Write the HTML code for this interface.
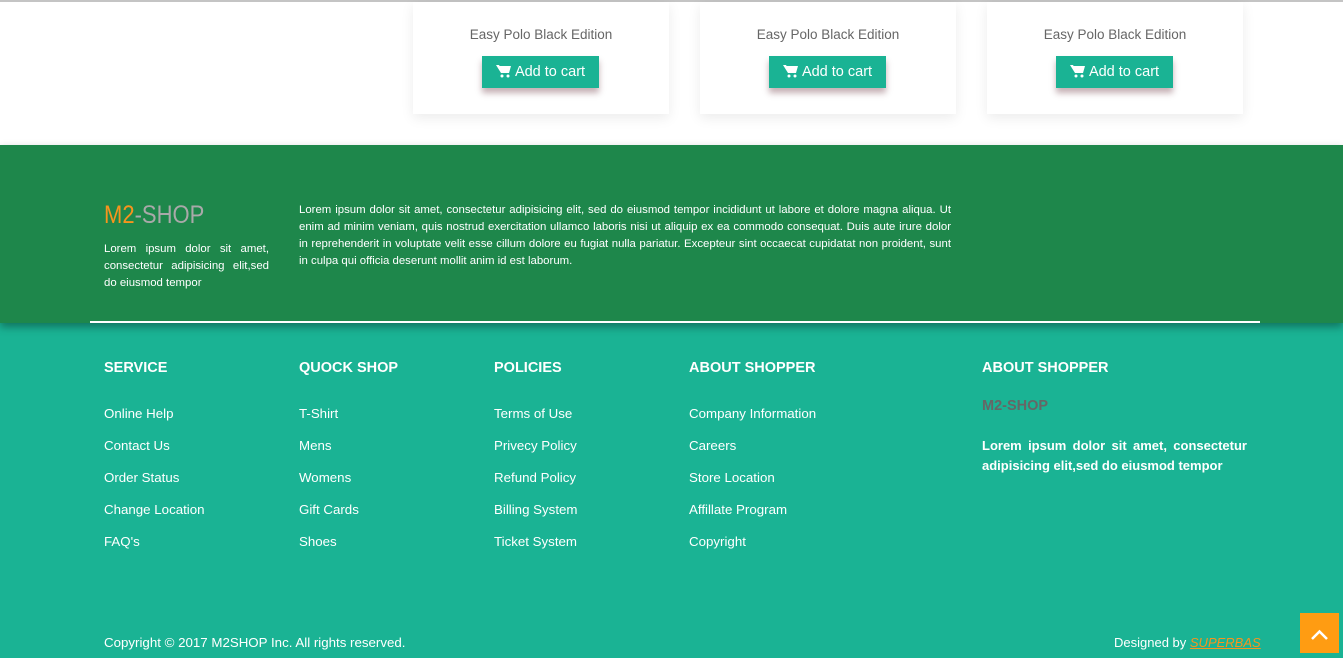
<!DOCTYPE html>
<html><head><meta charset="utf-8"><style>
*{margin:0;padding:0;box-sizing:border-box}
body{width:1343px;height:658px;overflow:hidden;font-family:"Liberation Sans",sans-serif;background:#fff;position:relative}
.topline{position:absolute;left:0;top:0;width:1343px;height:2px;background:#c4c4c4}
.card{position:absolute;top:2px;width:256px;height:112px;background:#fff;box-shadow:0 4px 12px rgba(0,0,0,.08);text-align:center}
.card .t{position:absolute;top:25px;left:0;right:0;font-size:13.5px;color:#666}
.btn{position:absolute;top:54px;left:69px;width:117px;height:32px;background:#1ab394;color:#fff;font-size:14.5px;line-height:32px;box-shadow:0 5px 6px rgba(90,30,40,.35)}
.btn svg{vertical-align:-2px;margin-right:4px}
.green{position:absolute;top:145px;left:0;width:1343px;height:178px;background:#1e874b;box-shadow:0 4px 8px rgba(0,0,0,.35);z-index:2}
.teal{position:absolute;top:323px;left:0;width:1343px;height:335px;background:#1ab394}
.logo{position:absolute;left:104px;top:201px;font-size:25px;color:#a9a9a9;white-space:nowrap;transform:scaleX(.88);transform-origin:left}
.logo b{color:#f7941d;font-weight:normal}
.sm{position:absolute;color:#fff;font-size:11.4px;line-height:17px;text-align:justify}
.hline{position:absolute;left:90px;top:321px;width:1170px;height:2px;background:#fff}
.col{position:absolute;top:359px;color:#fff}
.col h4{font-size:14.5px;font-weight:bold;margin-bottom:30px;margin-top:1px}
.col a{display:block;font-size:13.3px;height:32px;color:#fff;text-decoration:none}
.copy{position:absolute;top:635px;left:104px;color:#fff;font-size:13.3px}
.des{position:absolute;top:635px;left:1114px;color:#fff;font-size:13px}
.des i{color:#f7941d;text-decoration:underline}
.up{position:absolute;left:1300px;top:613px;width:39px;height:40px;background:#ff9c12}
</style></head><body>
<div class="topline"></div>
<div class="card" style="left:413px"><div class="t">Easy Polo Black Edition</div><div class="btn"><svg width="15" height="13" viewBox="0 0 15 13"><path d="M0 0h3l.6 1H15l-2 7H5z" fill="#fff"/><circle cx="6" cy="11" r="1.5" fill="#fff"/><circle cx="12" cy="11" r="1.5" fill="#fff"/></svg>Add to cart</div></div>
<div class="card" style="left:700px"><div class="t">Easy Polo Black Edition</div><div class="btn"><svg width="15" height="13" viewBox="0 0 15 13"><path d="M0 0h3l.6 1H15l-2 7H5z" fill="#fff"/><circle cx="6" cy="11" r="1.5" fill="#fff"/><circle cx="12" cy="11" r="1.5" fill="#fff"/></svg>Add to cart</div></div>
<div class="card" style="left:987px"><div class="t">Easy Polo Black Edition</div><div class="btn"><svg width="15" height="13" viewBox="0 0 15 13"><path d="M0 0h3l.6 1H15l-2 7H5z" fill="#fff"/><circle cx="6" cy="11" r="1.5" fill="#fff"/><circle cx="12" cy="11" r="1.5" fill="#fff"/></svg>Add to cart</div></div>
<div class="green"></div>
<div style="position:absolute;top:0;left:0;z-index:3">
<div class="logo"><b>M2</b>-SHOP</div>
<div class="sm" style="left:104px;top:241px;width:165px">Lorem ipsum dolor sit amet, consectetur adipisicing elit,sed do eiusmod tempor</div>
<div class="sm" style="left:299px;top:202px;width:652px">Lorem ipsum dolor sit amet, consectetur adipisicing elit, sed do eiusmod tempor incididunt ut labore et dolore magna aliqua. Ut enim ad minim veniam, quis nostrud exercitation ullamco laboris nisi ut aliquip ex ea commodo consequat. Duis aute irure dolor in reprehenderit in voluptate velit esse cillum dolore eu fugiat nulla pariatur. Excepteur sint occaecat cupidatat non proident, sunt in culpa qui officia deserunt mollit anim id est laborum.</div>
<div class="hline"></div>
</div>
<div class="teal"></div>
<div class="col" style="left:104px"><h4>SERVICE</h4><a>Online Help</a><a>Contact Us</a><a>Order Status</a><a>Change Location</a><a>FAQ's</a></div>
<div class="col" style="left:299px"><h4>QUOCK SHOP</h4><a>T-Shirt</a><a>Mens</a><a>Womens</a><a>Gift Cards</a><a>Shoes</a></div>
<div class="col" style="left:494px"><h4>POLICIES</h4><a>Terms of Use</a><a>Privecy Policy</a><a>Refund Policy</a><a>Billing System</a><a>Ticket System</a></div>
<div class="col" style="left:689px"><h4>ABOUT SHOPPER</h4><a>Company Information</a><a>Careers</a><a>Store Location</a><a>Affillate Program</a><a>Copyright</a></div>
<div class="col" style="left:982px;width:265px"><h4 style="margin-bottom:0">ABOUT SHOPPER</h4>
<div style="color:#666;font-weight:bold;font-size:14.5px;margin-top:22px">M2-SHOP</div>
<div style="font-weight:bold;font-size:13px;line-height:20px;margin-top:22px;text-align:justify">Lorem ipsum dolor sit amet, consectetur adipisicing elit,sed do eiusmod tempor</div></div>
<div class="copy">Copyright © 2017 M2SHOP Inc. All rights reserved.</div>
<div class="des">Designed by <i>SUPERBAS</i></div>
<div class="up"><svg width="39" height="40"><path d="M12 26l7.5-7.5L27 26" stroke="#fff" stroke-width="2.5" fill="none"/></svg></div>
</body></html>
